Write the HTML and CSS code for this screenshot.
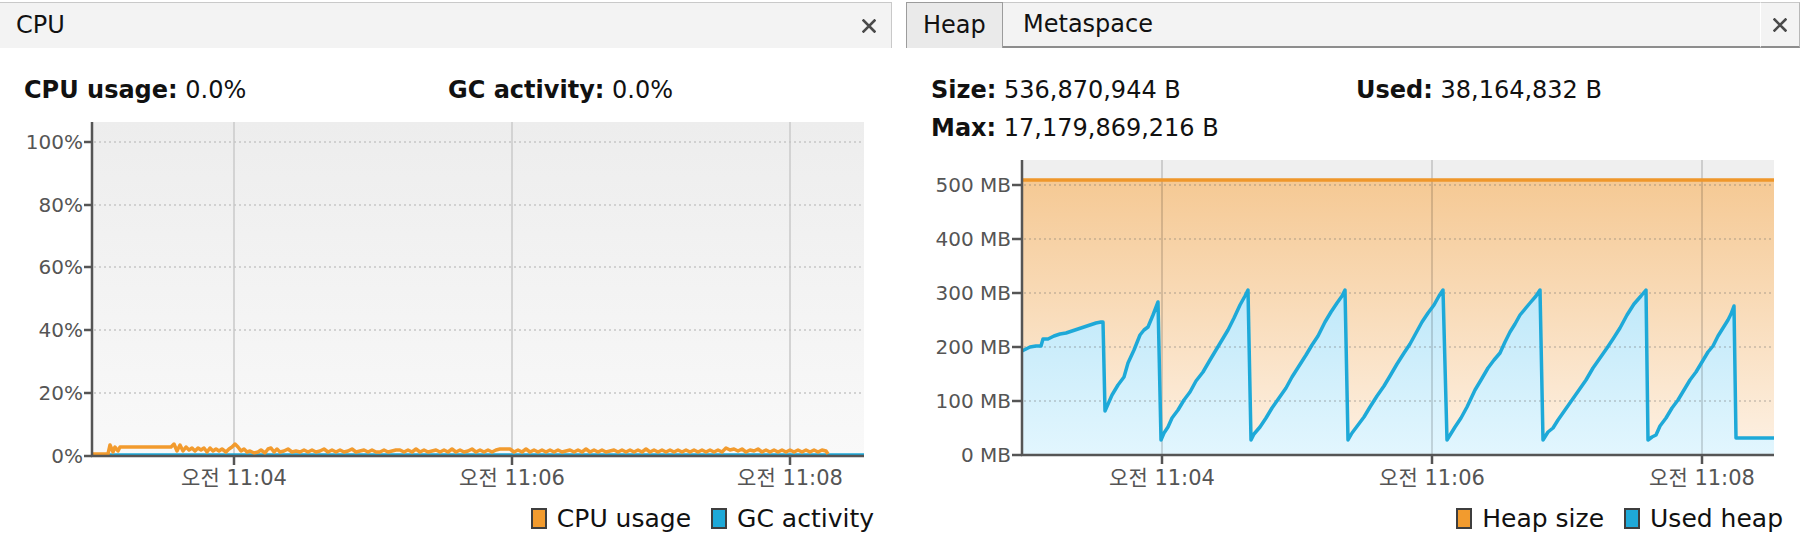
FILE: index.html
```html
<!DOCTYPE html>
<html lang="ko">
<head>
<meta charset="utf-8">
<title>Monitor</title>
<link rel="stylesheet" href="styles.css">
</head>
<body>
<div class="page">
  <section class="panel panel-cpu">
    <div class="tabbar single">
      <div class="tab-title">CPU</div>
      <div class="spacer"></div>
      <div class="close"><svg width="14" height="14" viewBox="0 0 14 14"><path d="M1.5 1.5 L12.5 12.5 M12.5 1.5 L1.5 12.5" stroke="#4a4a4a" stroke-width="2.6" stroke-linecap="square"/></svg></div>
    </div>
    <div class="stats stats-cpu">
      <div class="stat"><b>CPU usage:</b> 0.0%</div>
      <div class="stat"><b>GC activity:</b> 0.0%</div>
    </div>
    <svg class="chart chart-cpu" width="892" height="385" viewBox="0 110 892 385">
      <defs>
        <linearGradient id="cpuBg" x1="0" y1="122" x2="0" y2="456" gradientUnits="userSpaceOnUse">
          <stop offset="0" stop-color="#ededed"/>
          <stop offset="1" stop-color="#f9f9f9"/>
        </linearGradient>
      </defs>
      <rect x="92" y="122" width="772" height="334" fill="url(#cpuBg)"/>
      <g class="vgrid">
        <line x1="234" y1="122" x2="234" y2="456"/>
        <line x1="512" y1="122" x2="512" y2="456"/>
        <line x1="790" y1="122" x2="790" y2="456"/>
      </g>
      <g class="hgrid">
        <line x1="94" y1="142" x2="864" y2="142"/>
        <line x1="94" y1="205" x2="864" y2="205"/>
        <line x1="94" y1="267" x2="864" y2="267"/>
        <line x1="94" y1="330" x2="864" y2="330"/>
        <line x1="94" y1="393" x2="864" y2="393"/>
      </g>
      <line class="gc-line" x1="93" y1="454.5" x2="864" y2="454.5"/>
      <polyline class="cpu-line" points="93,454 108,454 110,445 113,452 115,447 118,451 120,447 171,447 174,444 177,451 180,445 183,451 186,447 189,450 192,448 195,451 198,448 201,450 204,448 207,452 210,448 213,451 216,449 219,451 222,449 226,452 229,449 232,447 235,444 238,447 241,451 244,449 247,452 250,451 254,453 258,452 261,450 265,453 268,449 271,448 274,452 277,449 280,452 284,451 288,449 292,452 296,451 300,452 304,450 308,452 312,450 316,452 320,451 324,449 328,452 332,450 336,452 340,450 344,452 348,451 352,449 356,452 360,451 364,450 368,452 372,450 376,452 380,452 384,450 388,452 392,451 396,450 400,450 404,452 408,450 412,452 416,449 420,452 424,450 428,452 432,451 436,450 440,452 444,450 448,452 452,449 456,452 460,450 464,452 468,451 472,449 476,452 480,450 484,452 488,450 492,452 496,450 500,449 510,449 514,452 518,450 522,452 526,449 530,452 534,450 538,452 542,450 546,452 550,450 554,452 558,450 562,452 566,451 570,450 574,452 578,450 582,452 586,449 590,452 594,450 598,452 602,450 606,452 610,451 614,450 618,452 622,450 626,452 630,450 634,452 638,450 642,452 646,449 650,452 654,450 658,452 662,450 666,452 670,450 674,452 678,450 682,452 686,450 690,452 694,450 698,452 702,450 706,452 710,450 714,452 718,450 722,452 726,448 730,450 734,449 738,451 742,449 746,452 750,450 754,451 758,449 762,452 766,450 770,452 774,450 778,452 782,450 786,452 790,450 794,452 798,450 802,452 806,450 810,452 814,450 818,452 822,450 826,451 828,454"/>
      <g class="axis">
        <line x1="92" y1="122" x2="92" y2="457"/>
        <line x1="91" y1="456" x2="864" y2="456"/>
        <line x1="84" y1="142" x2="92" y2="142"/>
        <line x1="84" y1="205" x2="92" y2="205"/>
        <line x1="84" y1="267" x2="92" y2="267"/>
        <line x1="84" y1="330" x2="92" y2="330"/>
        <line x1="84" y1="393" x2="92" y2="393"/>
        <line x1="84" y1="456" x2="92" y2="456"/>
        <line x1="234" y1="456" x2="234" y2="465"/>
        <line x1="512" y1="456" x2="512" y2="465"/>
        <line x1="790" y1="456" x2="790" y2="465"/>
      </g>
      <g class="ylabels">
        <text x="83" y="142">100%</text>
        <text x="83" y="205">80%</text>
        <text x="83" y="267">60%</text>
        <text x="83" y="330">40%</text>
        <text x="83" y="393">20%</text>
        <text x="83" y="456">0%</text>
      </g>
      <g class="xlabels">
        <text x="234" y="478">오전 11:04</text>
        <text x="512" y="478">오전 11:06</text>
        <text x="790" y="478">오전 11:08</text>
      </g>
    </svg>
    <div class="legend">
      <div class="legend-item"><span class="swatch swatch-orange"></span>CPU usage</div>
      <div class="legend-item"><span class="swatch swatch-blue"></span>GC activity</div>
    </div>
  </section>

  <section class="panel panel-heap">
    <div class="tabbar tabs">
      <div class="tab tab-active">Heap</div>
      <div class="tab tab-other">Metaspace</div>
      <div class="spacer filler"></div>
      <div class="close close-tabs"><svg width="14" height="14" viewBox="0 0 14 14"><path d="M1.5 1.5 L12.5 12.5 M12.5 1.5 L1.5 12.5" stroke="#4a4a4a" stroke-width="2.6" stroke-linecap="square"/></svg></div>
    </div>
    <div class="stats stats-heap">
      <div class="stat"><b>Size:</b> 536,870,944 B</div>
      <div class="stat"><b>Used:</b> 38,164,832 B</div>
      <div class="stat"><b>Max:</b> 17,179,869,216 B</div>
    </div>
    <svg class="chart chart-heap" width="894" height="347" viewBox="906 148 894 347">
      <defs>
        <linearGradient id="heapFill" x1="0" y1="180" x2="0" y2="455" gradientUnits="userSpaceOnUse">
          <stop offset="0" stop-color="#f5c994"/>
          <stop offset="1" stop-color="#fdf1e4"/>
        </linearGradient>
        <linearGradient id="usedFill" x1="0" y1="290" x2="0" y2="455" gradientUnits="userSpaceOnUse">
          <stop offset="0" stop-color="#bfe8f9"/>
          <stop offset="1" stop-color="#e2f6fe"/>
        </linearGradient>
      </defs>
      <rect x="1022" y="160" width="752" height="295" fill="#efefef"/>
      <rect x="1022" y="180" width="752" height="275" fill="url(#heapFill)"/>
      <polygon fill="url(#usedFill)" points="1022,455 1022,351 1024,350 1030,347 1036,346 1041,346 1043,339 1048,339 1054,336 1060,334 1066,333 1072,331 1078,329 1084,327 1090,325 1096,323 1101,322 1103,322 1105,411 1112,395 1118,385 1124,377 1128,363 1134,350 1140,335 1144,330 1148,327 1153,315 1158,302 1161,440 1164,433 1168,427 1172,418 1178,410 1184,400 1190,392 1196,381 1203,372 1210,360 1216,350 1222,340 1228,330 1234,318 1240,305 1245,296 1248,290 1251,440 1254,434 1260,427 1266,418 1272,408 1279,398 1286,388 1292,377 1299,366 1306,355 1312,345 1318,336 1325,322 1331,312 1337,303 1342,296 1345,290 1348,440 1352,433 1358,425 1364,417 1370,407 1377,396 1384,386 1390,376 1397,364 1404,353 1410,344 1416,333 1422,322 1428,313 1434,305 1439,296 1443,290 1447,440 1455,427 1461,418 1467,407 1475,390 1481,380 1488,368 1494,360 1500,353 1505,342 1510,332 1515,324 1520,315 1525,309 1530,303 1536,296 1540,290 1543,440 1548,432 1553,428 1558,420 1565,410 1572,400 1579,390 1586,380 1593,368 1600,358 1607,348 1613,339 1620,328 1627,315 1634,304 1641,296 1646,290 1648,440 1652,437 1656,435 1660,426 1666,418 1672,408 1678,400 1684,390 1690,380 1696,372 1702,362 1708,352 1713,346 1718,336 1723,328 1728,320 1731,314 1734,306 1736,438 1774,438 1774,455"/>
      <g class="hgrid hgrid-heap">
        <line x1="1024" y1="185" x2="1774" y2="185"/>
        <line x1="1024" y1="239" x2="1774" y2="239"/>
        <line x1="1024" y1="293" x2="1774" y2="293"/>
        <line x1="1024" y1="347" x2="1774" y2="347"/>
        <line x1="1024" y1="401" x2="1774" y2="401"/>
      </g>
      <g class="vgrid vgrid-heap">
        <line x1="1162" y1="160" x2="1162" y2="455"/>
        <line x1="1432" y1="160" x2="1432" y2="455"/>
        <line x1="1702" y1="160" x2="1702" y2="455"/>
      </g>
      <line class="heap-line" x1="1022" y1="180" x2="1774" y2="180"/>
      <polyline class="used-line" points="1022,351 1024,350 1030,347 1036,346 1041,346 1043,339 1048,339 1054,336 1060,334 1066,333 1072,331 1078,329 1084,327 1090,325 1096,323 1101,322 1103,322 1105,411 1112,395 1118,385 1124,377 1128,363 1134,350 1140,335 1144,330 1148,327 1153,315 1158,302 1161,440 1164,433 1168,427 1172,418 1178,410 1184,400 1190,392 1196,381 1203,372 1210,360 1216,350 1222,340 1228,330 1234,318 1240,305 1245,296 1248,290 1251,440 1254,434 1260,427 1266,418 1272,408 1279,398 1286,388 1292,377 1299,366 1306,355 1312,345 1318,336 1325,322 1331,312 1337,303 1342,296 1345,290 1348,440 1352,433 1358,425 1364,417 1370,407 1377,396 1384,386 1390,376 1397,364 1404,353 1410,344 1416,333 1422,322 1428,313 1434,305 1439,296 1443,290 1447,440 1455,427 1461,418 1467,407 1475,390 1481,380 1488,368 1494,360 1500,353 1505,342 1510,332 1515,324 1520,315 1525,309 1530,303 1536,296 1540,290 1543,440 1548,432 1553,428 1558,420 1565,410 1572,400 1579,390 1586,380 1593,368 1600,358 1607,348 1613,339 1620,328 1627,315 1634,304 1641,296 1646,290 1648,440 1652,437 1656,435 1660,426 1666,418 1672,408 1678,400 1684,390 1690,380 1696,372 1702,362 1708,352 1713,346 1718,336 1723,328 1728,320 1731,314 1734,306 1736,438 1774,438"/>
      <g class="axis">
        <line x1="1022" y1="160" x2="1022" y2="456"/>
        <line x1="1021" y1="455" x2="1774" y2="455"/>
        <line x1="1012" y1="185" x2="1022" y2="185"/>
        <line x1="1012" y1="239" x2="1022" y2="239"/>
        <line x1="1012" y1="293" x2="1022" y2="293"/>
        <line x1="1012" y1="347" x2="1022" y2="347"/>
        <line x1="1012" y1="401" x2="1022" y2="401"/>
        <line x1="1012" y1="455" x2="1022" y2="455"/>
        <line x1="1162" y1="455" x2="1162" y2="464"/>
        <line x1="1432" y1="455" x2="1432" y2="464"/>
        <line x1="1702" y1="455" x2="1702" y2="464"/>
      </g>
      <g class="ylabels">
        <text x="1011" y="185">500 MB</text>
        <text x="1011" y="239">400 MB</text>
        <text x="1011" y="293">300 MB</text>
        <text x="1011" y="347">200 MB</text>
        <text x="1011" y="401">100 MB</text>
        <text x="1011" y="455">0 MB</text>
      </g>
      <g class="xlabels">
        <text x="1162" y="478">오전 11:04</text>
        <text x="1432" y="478">오전 11:06</text>
        <text x="1702" y="478">오전 11:08</text>
      </g>
    </svg>
    <div class="legend">
      <div class="legend-item"><span class="swatch swatch-orange"></span>Heap size</div>
      <div class="legend-item"><span class="swatch swatch-blue"></span>Used heap</div>
    </div>
  </section>
</div>
</body>
</html>
```

FILE: styles.css
```css
* { box-sizing: border-box; }

html, body {
  margin: 0;
  padding: 0;
  background: #ffffff;
}

body {
  font-family: "DejaVu Sans", "Noto Sans CJK KR", sans-serif;
  color: #111111;
  width: 1810px;
  height: 554px;
  overflow: hidden;
}

.page {
  display: flex;
  gap: 14px;
  padding-top: 2px;
}

.panel {
  display: flex;
  flex-direction: column;
}

.panel-cpu { width: 892px; }
.panel-heap { width: 894px; }

/* ---------- tab bars ---------- */
.tabbar {
  display: flex;
  align-items: stretch;
  height: 46px;
  font-size: 24px;
}

.tabbar.single {
  background: #f3f3f3;
  border-top: 1px solid #c9c9c9;
  border-right: 1px solid #c9c9c9;
}

.tab-title {
  display: flex;
  align-items: center;
  padding-left: 16px;
  padding-bottom: 1px;
}

.spacer { flex: 1; }

.close {
  width: 40px;
  display: flex;
  align-items: center;
  justify-content: center;
}

.panel-cpu .close {
  width: 40px;
  padding-right: 4px;
}

.tab {
  display: flex;
  align-items: center;
  padding-bottom: 1px;
}

.tab-active {
  width: 97px;
  padding-left: 16px;
  background: #eaeaea;
  border: 1px solid #9c9c9c;
  border-bottom: none;
}

.tab-other {
  padding-left: 20px;
  padding-right: 10px;
  background: #f3f3f3;
  border-top: 1px solid #c9c9c9;
  border-bottom: 2px solid #8d8d8d;
}

.filler {
  background: #f3f3f3;
  border-top: 1px solid #c9c9c9;
  border-bottom: 2px solid #8d8d8d;
  border-right: 1px solid #ffffff;
}

.close-tabs {
  width: 39px;
  background: #f3f3f3;
  border-top: 1px solid #c9c9c9;
  border-bottom: 2px solid #8d8d8d;
  border-right: 1px solid #b8b8b8;
}

/* ---------- stats ---------- */
.stats {
  display: grid;
  font-size: 24px;
  line-height: 38px;
  padding-top: 23px;
  padding-bottom: 1px;
  white-space: nowrap;
}

.stats-cpu {
  grid-template-columns: 424px auto;
  padding-left: 24px;
}

.stats-heap {
  grid-template-columns: 425px auto;
  padding-left: 25px;
}

.stat b { font-weight: bold; }

/* ---------- charts ---------- */
.chart { display: block; }

.vgrid line {
  stroke: #d3d3d3;
  stroke-width: 2;
}

.vgrid-heap line {
  stroke: rgba(0, 0, 0, 0.14);
}

.hgrid line {
  stroke: #c6c6c6;
  stroke-width: 1.5;
  stroke-dasharray: 2 3;
}

.hgrid-heap line {
  stroke: rgba(110, 110, 110, 0.35);
}

.gc-line {
  stroke: #1ea9d8;
  stroke-width: 2.5;
}

.cpu-line {
  fill: none;
  stroke: #f29b2e;
  stroke-width: 3.5;
  stroke-linejoin: round;
}

.heap-line {
  stroke: #ef972b;
  stroke-width: 3.5;
}

.used-line {
  fill: none;
  stroke: #1ea9d8;
  stroke-width: 3.5;
  stroke-linejoin: round;
}

.axis line {
  stroke: #555555;
  stroke-width: 2.5;
}

.ylabels text {
  font-family: "DejaVu Sans", sans-serif;
  font-size: 20px;
  fill: #555555;
  text-anchor: end;
  dominant-baseline: central;
}

.xlabels text {
  font-family: "DejaVu Sans", "Noto Sans CJK KR", sans-serif;
  font-size: 21px;
  fill: #555555;
  text-anchor: middle;
  dominant-baseline: central;
}

/* ---------- legend ---------- */
.legend {
  display: flex;
  justify-content: flex-end;
  align-items: center;
  gap: 20px;
  height: 46px;
  font-size: 25px;
  padding-right: 18px;
}

.panel-heap .legend { padding-right: 17px; }

.legend-item {
  display: flex;
  align-items: center;
  gap: 10px;
}

.swatch {
  display: inline-block;
  width: 16px;
  height: 21px;
  border: 2px solid #3e3e3e;
}

.swatch-orange { background: #f29b2e; }
.swatch-blue { background: #1ea9d8; }
```
